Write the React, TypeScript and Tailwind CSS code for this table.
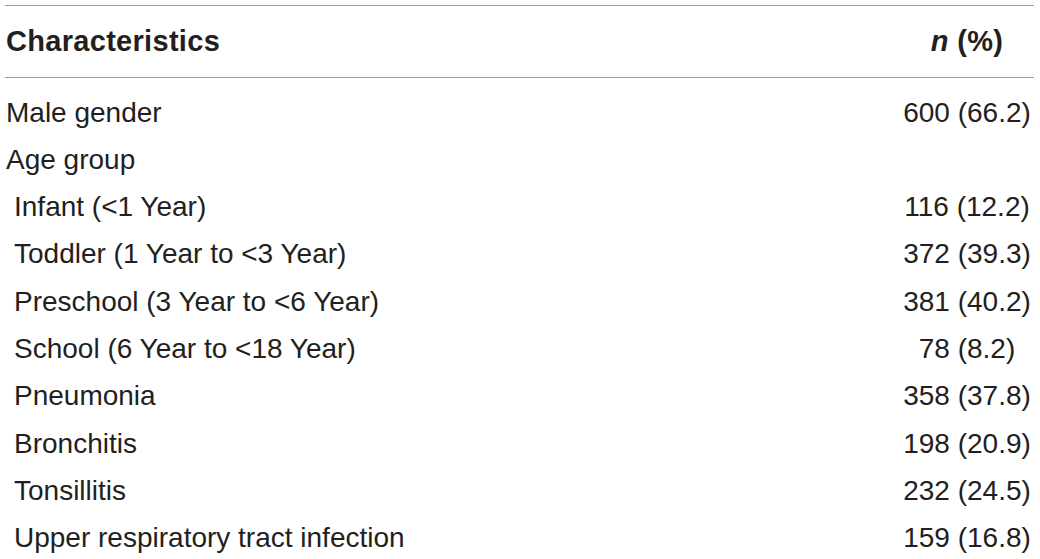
import React from "react";

const rows: { label: string; value: string; indent: boolean }[] = [
  { label: "Male gender", value: "600 (66.2)", indent: false },
  { label: "Age group", value: "", indent: false },
  { label: "Infant (<1 Year)", value: "116 (12.2)", indent: true },
  { label: "Toddler (1 Year to <3 Year)", value: "372 (39.3)", indent: true },
  { label: "Preschool (3 Year to <6 Year)", value: "381 (40.2)", indent: true },
  { label: "School (6 Year to <18 Year)", value: "78 (8.2)", indent: true },
  { label: "Pneumonia", value: "358 (37.8)", indent: true },
  { label: "Bronchitis", value: "198 (20.9)", indent: true },
  { label: "Tonsillitis", value: "232 (24.5)", indent: true },
  { label: "Upper respiratory tract infection", value: "159 (16.8)", indent: true },
];

export default function App() {
  return (
    <div
      className="bg-white w-[1040px] h-[559px] overflow-hidden pl-[5px] pt-[5px] text-[#231f20]"
      style={{ fontFamily: '"Liberation Sans", Arial, sans-serif' }}
    >
      <div className="w-[1029px]">
        <div className="border-t border-[#9a9a9a] flex h-[72px] items-center text-[29px] leading-[71px] font-bold tracking-[0.3px]">
          <div className="flex-1 pl-[1px]">Characteristics</div>
          <div className="w-[134px] text-center">
            <span className="italic">n</span> (%)
          </div>
        </div>
        <div className="border-t border-[#9a9a9a] pt-[10.5px]">
          {rows.map((r) => (
            <div key={r.label} className="flex text-[28px] leading-[47.33px] h-[47.33px]">
              <div className={r.indent ? "flex-1 pl-[9px] whitespace-nowrap" : "flex-1 pl-[1px] whitespace-nowrap"}>
                {r.label}
              </div>
              <div className="w-[134px] text-center whitespace-nowrap">{r.value}</div>
            </div>
          ))}
        </div>
      </div>
    </div>
  );
}
